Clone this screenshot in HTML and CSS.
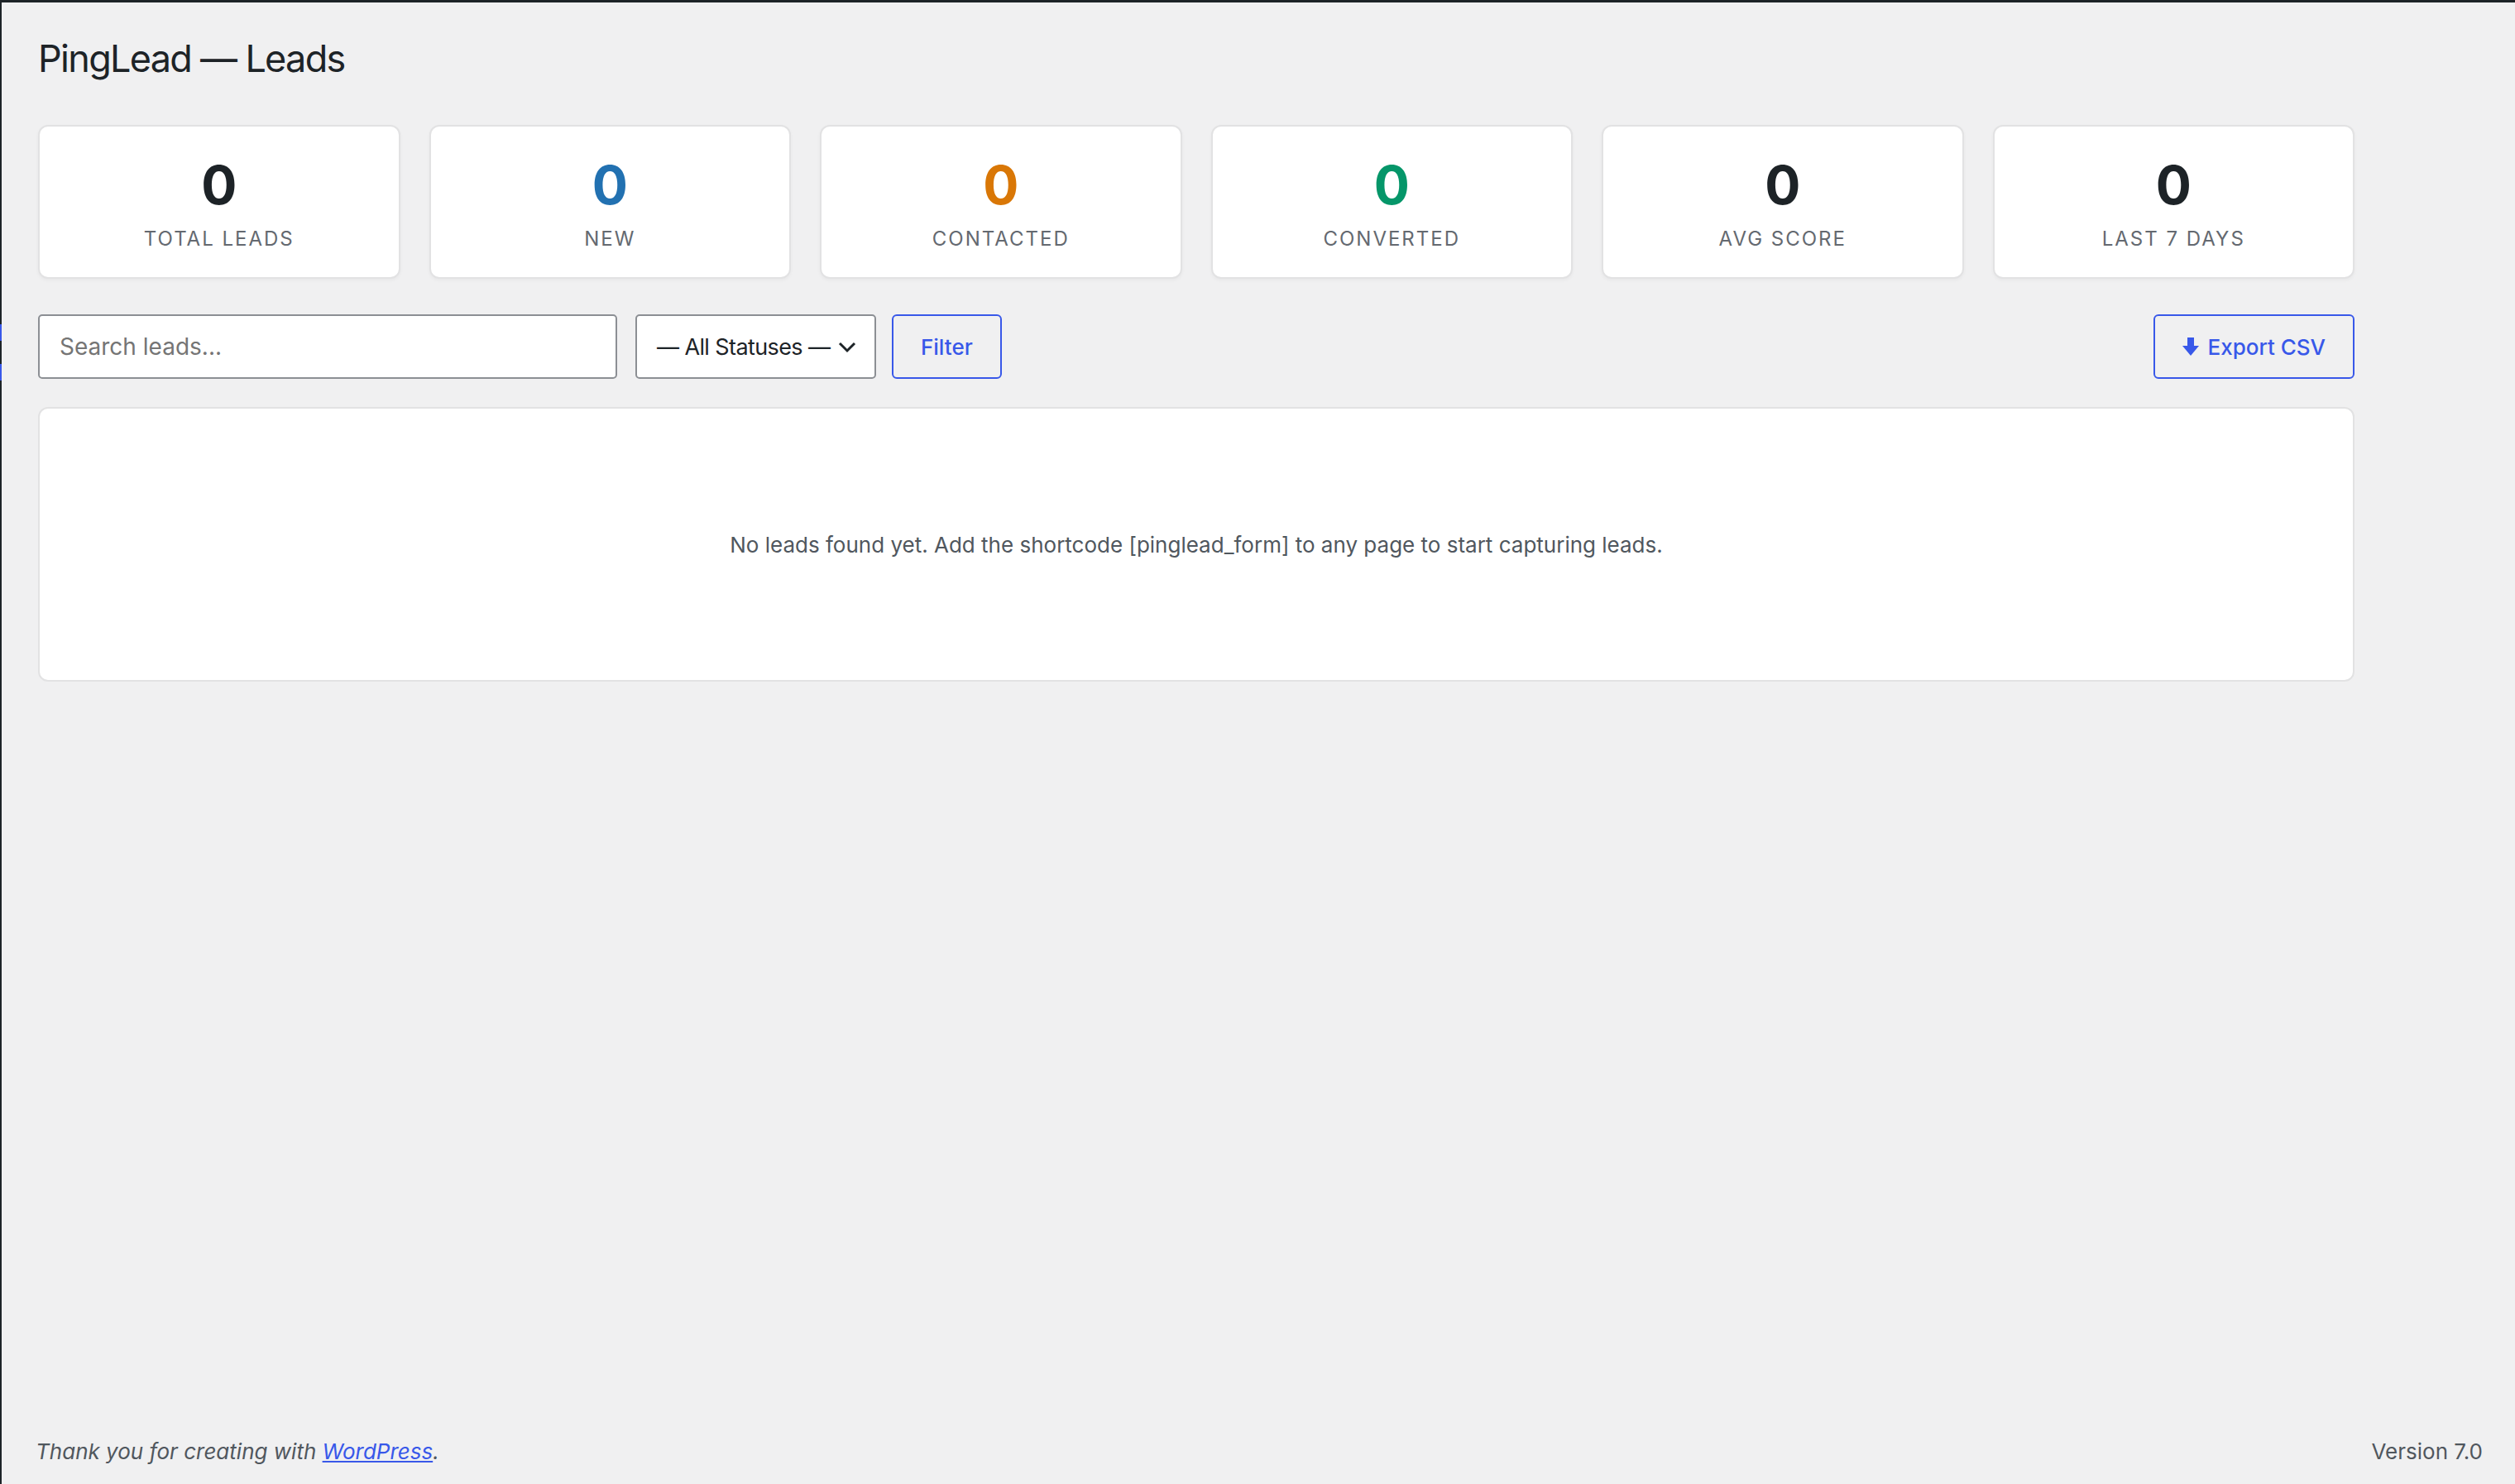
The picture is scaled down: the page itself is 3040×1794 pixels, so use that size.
FILE: index.html
```html
<!DOCTYPE html>
<html lang="en">
<head>
    <meta charset="UTF-8">
    <meta name="viewport" content="width=device-width, initial-scale=1.0">
    <title>PingLead — Leads</title>
    <link rel="stylesheet" href="styles.css">
</head>
<body>
    <div class="screen">
        <div class="edge"></div>

        <div class="page">
            <div class="wrap">
                <h1>PingLead — Leads</h1>

                <div class="stats">
                    <div class="stat-card">
                        <div class="stat-number">0</div>
                        <div class="stat-label">Total Leads</div>
                    </div>
                    <div class="stat-card">
                        <div class="stat-number stat-new">0</div>
                        <div class="stat-label">New</div>
                    </div>
                    <div class="stat-card">
                        <div class="stat-number stat-contacted">0</div>
                        <div class="stat-label">Contacted</div>
                    </div>
                    <div class="stat-card">
                        <div class="stat-number stat-converted">0</div>
                        <div class="stat-label">Converted</div>
                    </div>
                    <div class="stat-card">
                        <div class="stat-number">0</div>
                        <div class="stat-label">Avg Score</div>
                    </div>
                    <div class="stat-card">
                        <div class="stat-number">0</div>
                        <div class="stat-label">Last 7 Days</div>
                    </div>
                </div>

                <form class="toolbar" onsubmit="return false;">
                    <input type="search" class="search-input" placeholder="Search leads...">
                    <div class="status-select">
                        <span class="select-text">— All Statuses —</span>
                        <svg class="chevron" width="22" height="14" viewBox="0 0 22 14">
                            <path d="M2 2 L11 11 L20 2" fill="none" stroke="#1d2327" stroke-width="3"/>
                        </svg>
                    </div>
                    <button type="submit" class="btn">Filter</button>
                    <button type="button" class="btn btn-export">
                        <svg width="20" height="22" viewBox="0 0 20 22">
                            <rect x="6" y="0" width="8" height="11" fill="#3858e9"/>
                            <path d="M0 10 H20 L10 22 Z" fill="#3858e9"/>
                        </svg>
                        Export CSV
                    </button>
                </form>

                <div class="empty-panel">
                    <p>No leads found yet. Add the shortcode [pinglead_form] to any page to start capturing leads.</p>
                </div>
            </div>

            <footer class="footer">
                <p class="thanks">Thank you for creating with <a href="#">WordPress</a>.</p>
                <p class="version">Version 7.0</p>
            </footer>
        </div>
    </div>
</body>
</html>
```

FILE: styles.css
```css
html, body {
    margin: 0;
    padding: 0;
}
body {
    font-family: Inter, "Noto Sans", sans-serif;
    background-color: #f0f0f1;
    color: #1d2327;
    border-top: 3px solid #1d2327;
}
.screen {
    display: grid;
    grid-template-columns: 2px 1fr;
    min-height: calc(100vh - 3px);
}
.edge {
    background: linear-gradient(to bottom,
        #1d2327 0, #1d2327 389px,
        #3858e9 389px, #3858e9 409px,
        #1d2327 409px, #1d2327 437px,
        #3858e9 437px, #3858e9 457px,
        #1d2327 457px);
}
.page {
    display: flex;
    flex-direction: column;
}
.wrap {
    max-width: 2800px;
    padding: 38px 0 0 44px;
}
h1 {
    margin: 0 0 50px 0;
    font-size: 45px;
    font-weight: 400;
    line-height: 60px;
    letter-spacing: -1.7px;
    color: #1d2327;
}
.stats {
    display: grid;
    grid-template-columns: repeat(6, 1fr);
    gap: 35px;
}
.stat-card {
    background-color: #fff;
    border: 2px solid #e2e2e3;
    border-radius: 12px;
    box-shadow: 0 2px 4px rgba(0,0,0,0.04);
    padding: 32px 10px 32px;
    text-align: center;
}
.stat-number {
    font-size: 64px;
    font-weight: 700;
    line-height: 77px;
    color: #1d2327;
}
.stat-new { color: #2271b1; }
.stat-contacted { color: #d97706; }
.stat-converted { color: #059669; }
.stat-label {
    margin-top: 12px;
    font-size: 24px;
    line-height: 29px;
    letter-spacing: 2px;
    text-transform: uppercase;
    color: #646970;
}
.toolbar {
    display: flex;
    align-items: center;
    margin-top: 43px;
    height: 78px;
}
.search-input {
    box-sizing: border-box;
    width: 700px;
    height: 78px;
    padding: 0 24px;
    border: 2px solid #8c8f94;
    border-radius: 5px;
    background: #fff;
    font-family: inherit;
    font-size: 28px;
    color: #1d2327;
    outline: none;
}
.search-input::placeholder {
    color: #757575;
}
.status-select {
    box-sizing: border-box;
    display: flex;
    align-items: center;
    justify-content: space-between;
    width: 291px;
    height: 78px;
    margin-left: 22px;
    padding: 0 22px 0 24px;
    border: 2px solid #8c8f94;
    border-radius: 5px;
    background: #fff;
    font-size: 27px;
    color: #1d2327;
}
.select-text {
    white-space: nowrap;
    letter-spacing: -0.6px;
}
.chevron {
    flex-shrink: 0;
    margin-top: 2px;
}
.btn {
    box-sizing: border-box;
    display: flex;
    align-items: center;
    gap: 10px;
    height: 78px;
    margin-left: 19px;
    padding: 0 33px;
    border: 2px solid #3858e9;
    border-radius: 6px;
    background: transparent;
    font-family: inherit;
    font-size: 26px;
    font-weight: 500;
    color: #3858e9;
    cursor: pointer;
}
.btn-export {
    margin-left: auto;
}
.empty-panel {
    box-sizing: border-box;
    display: flex;
    align-items: center;
    justify-content: center;
    height: 332px;
    margin-top: 34px;
    background: #fff;
    border: 2px solid #e2e2e3;
    border-radius: 12px;
}
.empty-panel p {
    margin: 0;
    font-size: 26px;
    color: #50575e;
}
.footer {
    display: flex;
    justify-content: space-between;
    align-items: center;
    margin-top: auto;
    padding: 0 39px 19px 41px;
    font-size: 26px;
    line-height: 40px;
    color: #50575e;
}
.footer p {
    margin: 0;
}
.thanks {
    font-style: italic;
}
.thanks a {
    color: #3858e9;
}
```
